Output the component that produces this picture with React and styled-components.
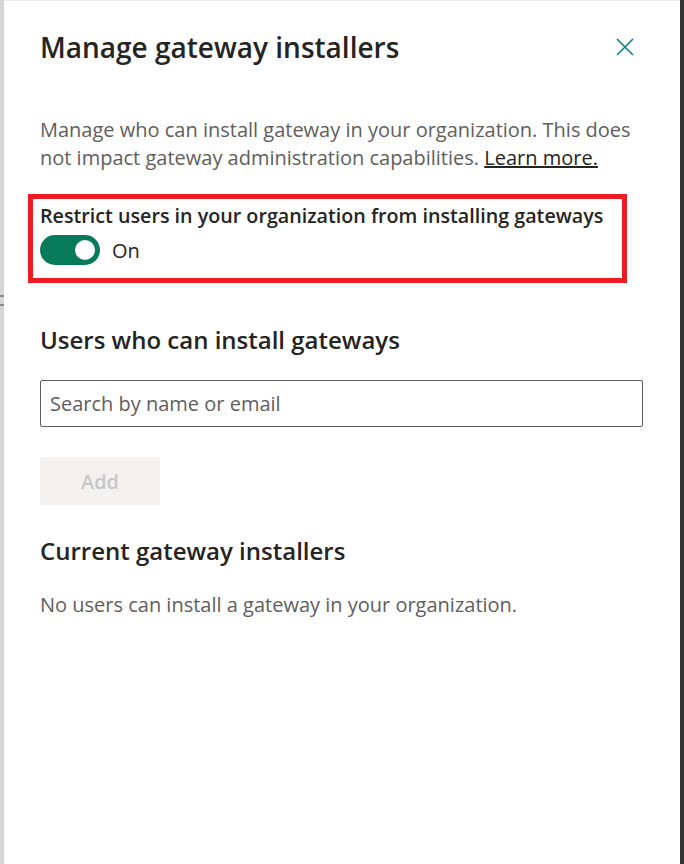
import React from 'react';
import styled, { createGlobalStyle } from 'styled-components';

const GlobalStyle = createGlobalStyle`
  html, body {
    margin: 0;
    padding: 0;
    background: #ffffff;
  }
  body {
    font-family: "Segoe UI", "Open Sans", "Noto Sans", sans-serif;
  }
  * {
    box-sizing: border-box;
  }
`;

const Frame = styled.div`
  display: flex;
  width: 684px;
  height: 864px;
`;

const LeftEdge = styled.div`
  width: 4px;
  background: #d6d6d6;
  padding-top: 295px;
  display: flex;
  flex-direction: column;
  gap: 7px;
`;

const Tick = styled.span`
  display: block;
  height: 2px;
  background: #8a8a8a;
`;

const RightEdge = styled.div`
  width: 4px;
  background: #333333;
`;

const Panel = styled.div`
  flex: 1;
  background: #ffffff;
  border-top: 1px solid #ebebeb;
  padding: 24px 36px 0 36px;
  color: #323130;
`;

const Header = styled.div`
  display: flex;
  justify-content: space-between;
  align-items: center;
`;

const Title = styled.h1`
  margin: 0;
  font-size: 28px;
  font-weight: 600;
  line-height: 44px;
  color: #252423;
`;

const CloseButton = styled.button`
  border: none;
  background: none;
  padding: 0;
  width: 24px;
  height: 24px;
  margin-right: 7px;
  display: flex;
  align-items: center;
  justify-content: center;
  color: #0f7f7b;
  cursor: pointer;
`;

const Description = styled.p`
  margin: 47px 0 0 0;
  font-size: 20px;
  line-height: 28px;
  color: #605e5c;
`;

const LearnMore = styled.a`
  color: #252423;
  text-decoration: underline;
`;

const Highlight = styled.div`
  margin: 22px 0 0 -12px;
  width: 599px;
  border: 5px solid #ed1c24;
  padding: 3px 7px 13px 7px;
`;

const ToggleLabel = styled.div`
  font-size: 19.7px;
  font-weight: 600;
  line-height: 28px;
  color: #252423;
  white-space: nowrap;
`;

const ToggleRow = styled.div`
  display: flex;
  align-items: center;
  gap: 12px;
  margin-top: 5px;
`;

const Track = styled.span`
  width: 60px;
  height: 30px;
  border-radius: 15px;
  background: ${(p) => (p.$on ? '#077a5a' : '#ffffff')};
  display: flex;
  align-items: center;
  justify-content: ${(p) => (p.$on ? 'flex-end' : 'flex-start')};
  padding: 0 5px;
`;

const Thumb = styled.span`
  width: 20px;
  height: 20px;
  border-radius: 50%;
  background: #ffffff;
`;

const ToggleText = styled.span`
  font-size: 20px;
  color: #252423;
`;

const SectionTitle = styled.h2`
  margin: ${(p) => p.$top}px 0 0 0;
  font-size: 24px;
  font-weight: 600;
  line-height: 32px;
  color: #252423;
`;

const SearchBox = styled.input`
  display: block;
  width: 603px;
  height: 47px;
  margin-top: 24px;
  border: 1px solid #605e5c;
  border-radius: 2px;
  padding: 0 9px;
  font-family: inherit;
  font-size: 20px;
  color: #323130;
  &::placeholder {
    color: #605e5c;
  }
`;

const AddButton = styled.button`
  display: block;
  margin-top: 30px;
  width: 120px;
  height: 48px;
  border: none;
  border-radius: 2px;
  background: #f3f2f1;
  color: #c8c6c4;
  font-family: inherit;
  font-size: 20px;
  font-weight: 600;
`;

const EmptyText = styled.p`
  margin: 24px 0 0 0;
  font-size: 20px;
  line-height: 28px;
  color: #605e5c;
`;

const App = () => (
  <>
    <GlobalStyle />
    <Frame>
      <LeftEdge>
        <Tick />
        <Tick />
      </LeftEdge>
      <Panel>
        <Header>
          <Title>Manage gateway installers</Title>
          <CloseButton aria-label="Close">
            <svg width="18" height="18" viewBox="0 0 18 18">
              <path d="M1 1 L17 17 M17 1 L1 17" stroke="currentColor" strokeWidth="1.6" fill="none" />
            </svg>
          </CloseButton>
        </Header>
        <Description>
          Manage who can install gateway in your organization. This does not impact gateway
          administration capabilities. <LearnMore href="#">Learn more.</LearnMore>
        </Description>
        <Highlight>
          <ToggleLabel>Restrict users in your organization from installing gateways</ToggleLabel>
          <ToggleRow>
            <Track $on>
              <Thumb />
            </Track>
            <ToggleText>On</ToggleText>
          </ToggleRow>
        </Highlight>
        <SectionTitle $top={41}>Users who can install gateways</SectionTitle>
        <SearchBox placeholder="Search by name or email" />
        <AddButton disabled>Add</AddButton>
        <SectionTitle $top={30}>Current gateway installers</SectionTitle>
        <EmptyText>No users can install a gateway in your organization.</EmptyText>
      </Panel>
      <RightEdge />
    </Frame>
  </>
);

export default App;
